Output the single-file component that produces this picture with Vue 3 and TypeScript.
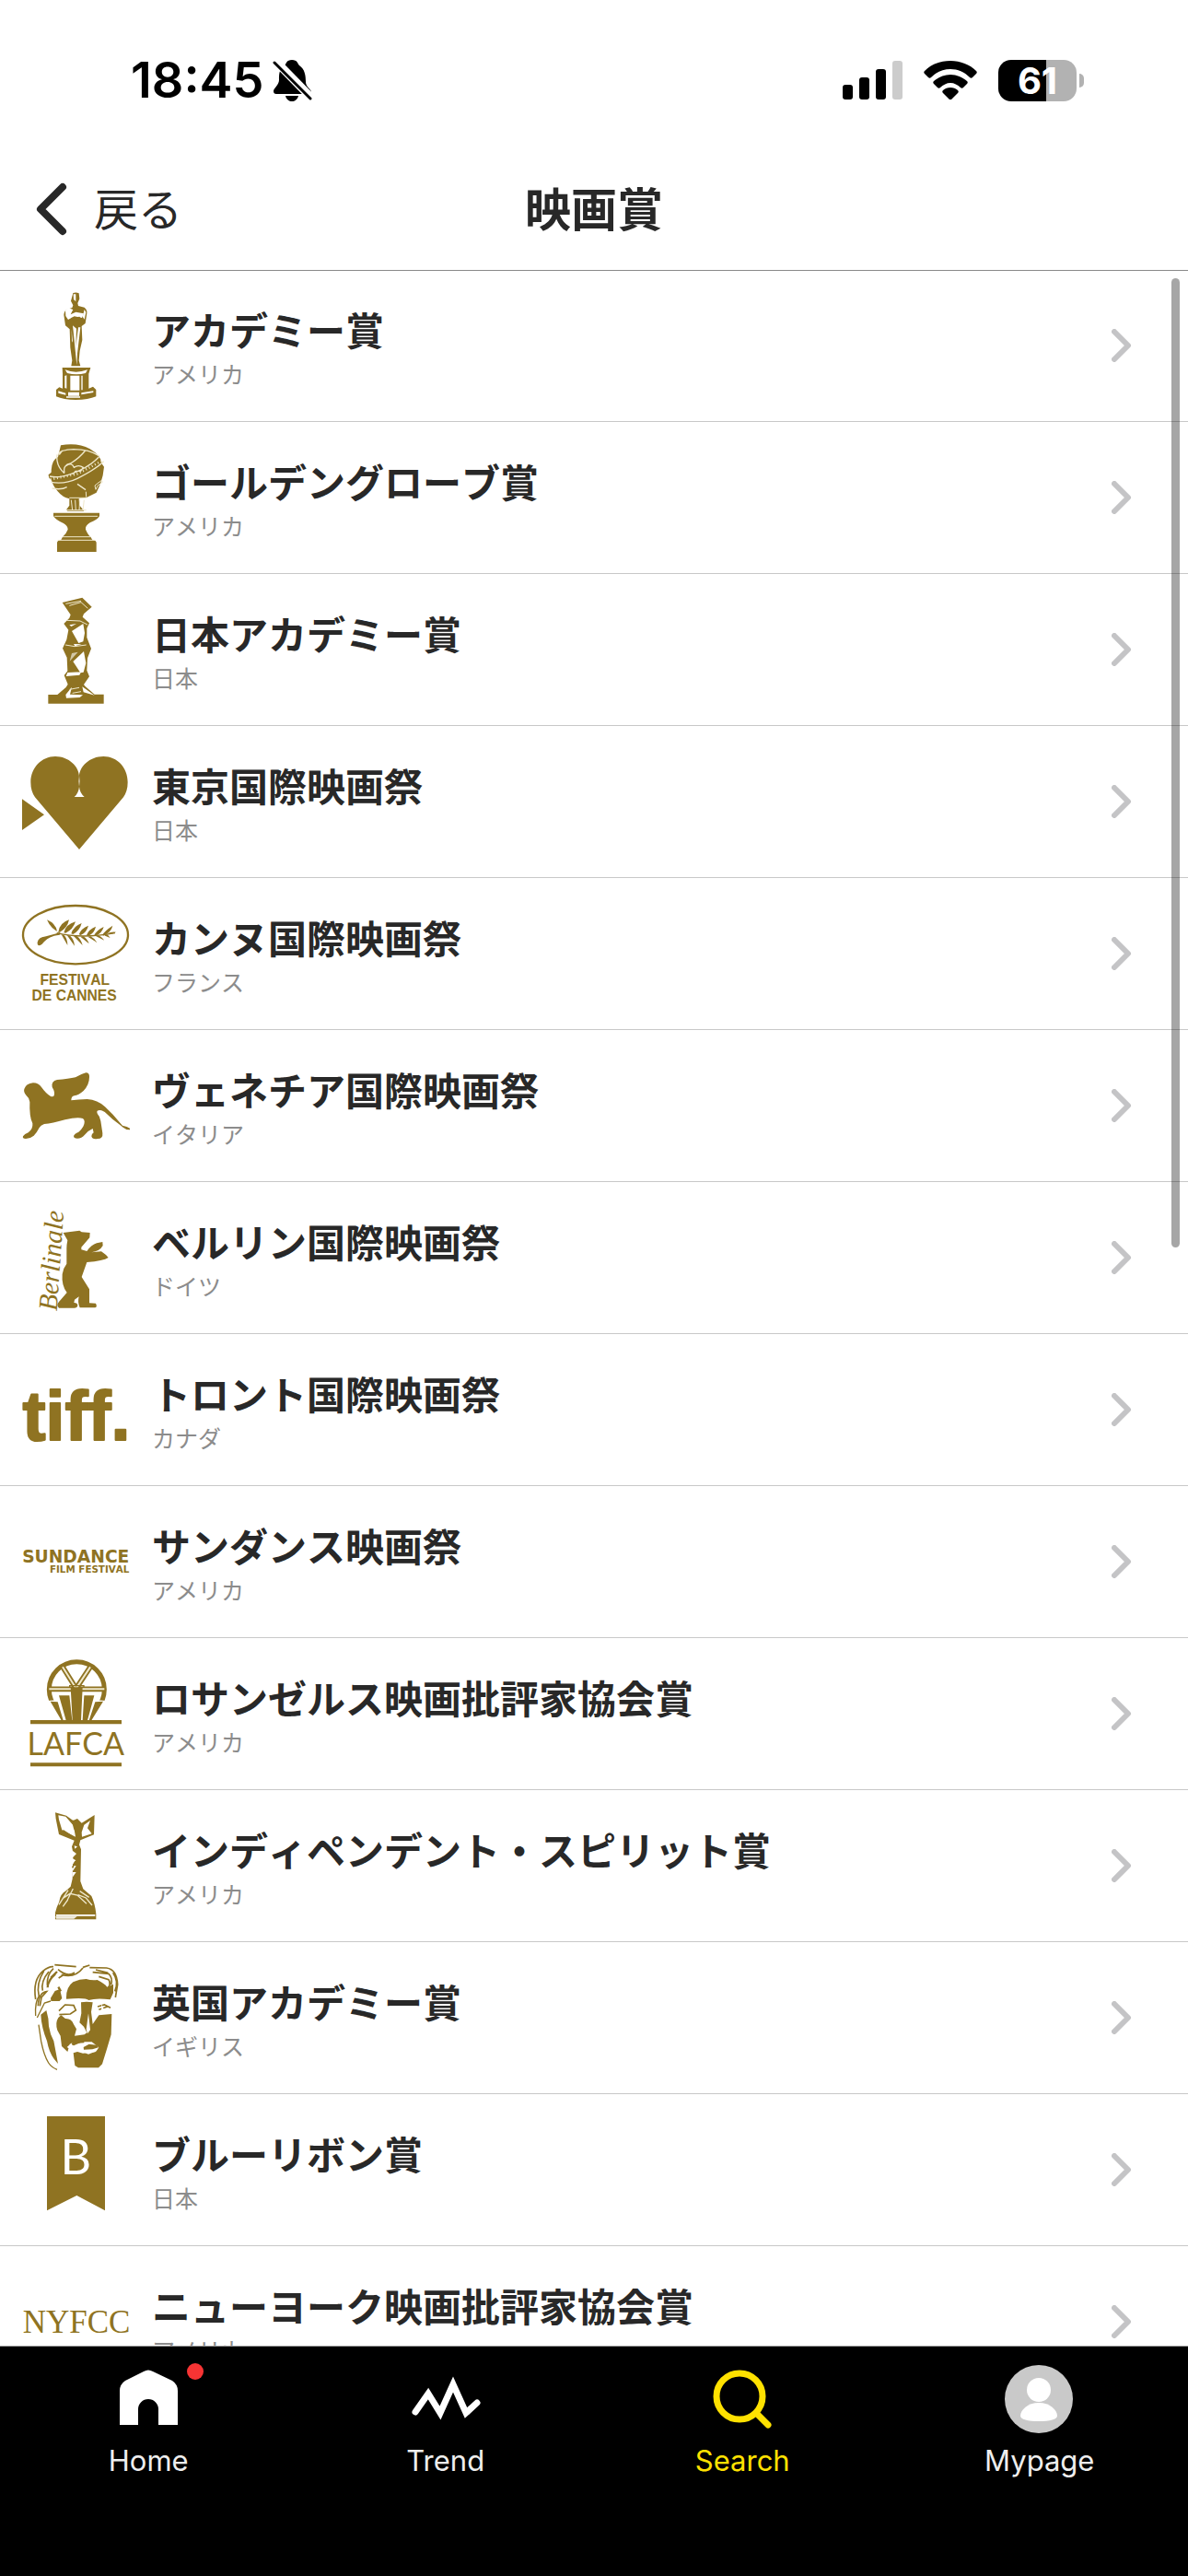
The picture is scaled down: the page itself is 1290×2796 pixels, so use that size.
<script setup lang="ts">
interface Award {
  id: string
  name: string
  country: string
  viewBox: string
}

interface Tab {
  id: string
  label: string
  active?: boolean
}

const upper = '72 81 351 351'
const lower = '72 576 351 351'

const awards: Award[] = [
  { id: 'oscar', name: 'アカデミー賞', country: 'アメリカ', viewBox: upper },
  { id: 'globe', name: 'ゴールデングローブ賞', country: 'アメリカ', viewBox: lower },
  { id: 'japan', name: '日本アカデミー賞', country: '日本', viewBox: upper },
  { id: 'tokyo', name: '東京国際映画祭', country: '日本', viewBox: lower },
  { id: 'cannes', name: 'カンヌ国際映画祭', country: 'フランス', viewBox: upper },
  { id: 'venice', name: 'ヴェネチア国際映画祭', country: 'イタリア', viewBox: lower },
  { id: 'berlin', name: 'ベルリン国際映画祭', country: 'ドイツ', viewBox: upper },
  { id: 'toronto', name: 'トロント国際映画祭', country: 'カナダ', viewBox: lower },
  { id: 'sundance', name: 'サンダンス映画祭', country: 'アメリカ', viewBox: upper },
  { id: 'lafca', name: 'ロサンゼルス映画批評家協会賞', country: 'アメリカ', viewBox: lower },
  { id: 'spirit', name: 'インディペンデント・スピリット賞', country: 'アメリカ', viewBox: upper },
  { id: 'bafta', name: '英国アカデミー賞', country: 'イギリス', viewBox: lower },
  { id: 'ribbon', name: 'ブルーリボン賞', country: '日本', viewBox: upper },
  { id: 'nyfcc', name: 'ニューヨーク映画批評家協会賞', country: 'アメリカ', viewBox: lower },
]

const tabs: Tab[] = [
  { id: 'home', label: 'Home' },
  { id: 'trend', label: 'Trend' },
  { id: 'search', label: 'Search', active: true },
  { id: 'mypage', label: 'Mypage' },
]
</script>

<template>
  <div class="screen">
    <div class="status">
      <div class="status-left">
        <span class="time">18:45</span>
        <svg class="bell" viewBox="0 0 43 46" width="43" height="46">
          <path d="M13 7C15 5 15 1 21 1s6 4 8 6c6 4 7 11 7 18 0 5 6 8 6 11 0 2-1 2-3 2H4c-2 0-3-1-3-3 0-3 6-7 6-12 0-7 0-12 6-16z" />
          <path d="M14 40h14c-1 4-4 6-7 6s-6-2-7-6z" />
          <path d="M1 0 43 43" stroke="#fff" stroke-width="9" />
          <path d="M2 4 41 43" stroke="#000" stroke-width="3" stroke-linecap="round" />
        </svg>
      </div>
      <div class="status-right">
        <svg viewBox="0 0 65 42" width="65" height="42">
          <rect x="0" y="26" width="11" height="16" rx="3" />
          <rect x="18" y="18" width="11" height="24" rx="3" />
          <rect x="36" y="9" width="11" height="33" rx="3" />
          <rect x="54" y="0" width="11" height="42" rx="3" fill="#ccc" />
        </svg>
        <svg viewBox="0 0 58 42" width="58" height="42">
          <path d="M29 0c11 0 21 4 28 11 1 1 1 2 0 3l-4 4c-1 1-2 1-3 0C44 12 37 9 29 9S14 12 8 18c-1 1-2 1-3 0l-4-4c-1-1-1-2 0-3C8 4 18 0 29 0z" />
          <path d="M29 15c7 0 13 3 18 7 1 1 1 2 0 3l-4 4c-1 1-2 1-3 0-3-3-7-5-11-5s-8 2-11 5c-1 1-2 1-3 0l-4-4c-1-1-1-2 0-3 5-4 11-7 18-7z" />
          <path d="M29 29c3 0 6 1 8 3 1 1 1 2 0 3l-7 7c-1 1-1 1-2 0l-7-7c-1-1-1-2 0-3 2-2 5-3 8-3z" />
        </svg>
        <div class="battery">
          <span class="battery-level">61</span>
          <span class="battery-tip"></span>
        </div>
      </div>
    </div>

    <header class="nav">
      <button class="back" type="button">
        <svg viewBox="0 0 34 58" width="34" height="58" fill="none" stroke="#282828" stroke-width="8" stroke-linecap="round" stroke-linejoin="round">
          <path d="M29 5 5 29l24 24" />
        </svg>
        <span class="back-label">戻る</span>
      </button>
      <h1>映画賞</h1>
    </header>

    <main class="content">
      <ul class="list">
        <li v-for="award in awards" :key="award.id">
          <a class="row" :href="'#' + award.id">
            <svg class="art" :viewBox="award.viewBox" width="117" height="117" aria-hidden="true">
              <g v-if="award.id === 'oscar'">
                <path d="M238 84q10-4 19 1l2 18-6 14 2 9 20 5q10 8 8 20l-5 32-12 9 2 45-8 35-3 32 5 18h-30l3-18-6-42-2-60-14-12-5-35q1-14 11-18l16-5 3-8-7-14z" />
                <path d="M203 327h92l-6 20v48l14-6 10 10v22q-25 11-66 11t-64-11v-22l10-8 11 4v-48z" />
                <g fill="#fff">
                  <path d="M239 88h8v24l-7-7z" />
                  <path d="m213 140 10-7 15 5-8 16 17-8 26 5-6 14-25-5-20 11-8-12z" />
                  <path d="m275 138 5 9-5 23-6-9z" />
                  <path d="m237 190 12 10-2 58 8-62h7l-10 85-2 38-6-60z" />
                  <path d="M233 200l4 45-3-5z" />
                  <path d="M212 334q35 14 73 0l-6 11q-30 8-60 0z" />
                  <path d="M211 354l6-2v43l-6-2zM229 353h30v48h-30zM265 353h4v47h-4z" />
                  <path d="M190 403l24 7v6l-24-6zM222 407h36v12h-36zM265 409l39-6v5l-39 7zM216 421h45v4h-45z" />
                </g>
                <path d="m231 165 28-4 6 7-24 8z" />
              </g>

              <g v-else-if="award.id === 'globe'">
                <path d="M198 580q55-10 95 12 35 20 40 50l6 8-4 28-8 28-13 28-32 16-25 4 1 20 16 20h-54l-4-4 10-14v-22q-22-4-38-24-16-18-20-36-11-8-10-18l9-8q0-40 22-50z" />
                <path d="M174 800h150v10q-5 12-31 22-16 10-14 22 8 18 16 24l6 10q10 0 13 8v31H186v-31q3-8 13-8l5-10q12-10 17-24 0-12-14-20-27-12-33-24z" />
                <g fill="none" stroke="#efe8cb" stroke-width="4">
                  <path d="M162 681q28 7 70-8 57-20 90-55M166 700q45 8 86-12 60-30 86-56M190 609q5-14 50-16 50 0 84 22M186 610q-5 36 24 61M278 597q-19 24-48 42-26 5-20 30M216 646q18-12 25 6 15-10 30 0l-8 12h-17l-8 9M252 706l27 19M170 720q30 6 48-4M203 597l-10 14" />
                  <path d="M164 691l88-18 80-42" stroke-dasharray="3 8" stroke-width="8" />
                  <path d="M312 724l6-12 16-12-3-6-22 17zM280 731l1 18M226 751h55M232 758l4 34M245 758l2 34M260 758l-2 34M274 758l-4 34M216 791h65M178 811h140M204 878h90M188 889h122" stroke-width="3" />
                </g>
              </g>

              <g v-else-if="award.id === 'japan'">
                <path d="m203 102 65-16 31 30-26 23-4 10 22 20-8 17v30l14 36-12 31-2 40 8 20-18 26 4 5 31 27h30v30H157v-29h30l28-24 6-10-12-29 11-14-2-44-14-30 13-28 6-32-15-20 18-19 4-10z" />
                <g fill="#fff">
                  <path d="m234 195 37-24 5 30-5 28-15 5zM238 294l35-33 7 38-8 30-10 2zM220 330l44-2-5 10-44 4zM268 376l40 28-36-10z" />
                  <path d="m226 175 23-4-17 9zM240 237l26 1-22 6zM214 402l20-25-6 24 42 2-10 8-44 2z" />
                  <path d="m234 267 20-4-27 30z" opacity=".6" />
                </g>
                <path d="m214 106 50-9M226 112l38-11 22 20M217 160l44 2 24 12M213 240l30 5 38-5M227 385l31-6M236 397l28-5" fill="none" stroke="#efe8cb" stroke-width="3" />
              </g>

              <g v-else-if="award.id === 'tokyo'">
                <path d="M258 906 114 736q-14-20-14-49c0-47 36-84 80-84s78 33 78 66c0-33 34-66 79-66s79 37 79 84q0 29-14 49z" />
                <path d="M258 666l3 18-3 17-3-17z" fill="#fff" opacity=".5" />
                <path d="M258 702q2 20 17 33h-33q14-12 16-33z" fill="#fff" />
                <path d="m72 742 72 51-72 50z" />
              </g>

              <g v-else-if="award.id === 'cannes'">
                <ellipse cx="246" cy="194" rx="171" ry="95" fill="none" stroke="#8f7322" stroke-width="7" />
                <path d="M122 218q3-16 28-19l45-12q-30-12-42-42 28 12 33 37 4 6 13 7l-5 5q-34 2-57 30-17 12-15-6z" />
                <path d="M185 188q80 20 190 0" fill="none" stroke="#8f7322" stroke-width="4" />
                <path d="M190 185q4-30 35-40-6 28-30 40zM208 187q6-27 38-36-8 26-32 37zM232 190q7-24 34-34-6 24-28 36zM257 193q7-20 31-29-6 23-25 31zM282 195q7-19 30-28-4 21-24 30zM306 197q8-18 32-29-6 21-27 30zM333 195q8-14 34-31-4 19-28 33zM350 190q12-7 28-5-13 8-28 5zM200 193l20 35q0-22-12-34zM218 195l25 35q-2-24-17-34zM240 198l29 30q-6-22-20-31zM262 200l28 23q-7-18-19-24zM286 200l30 19q-10-15-21-20zM312 198l28 14q-8-11-19-16zM337 195l22 9-9-11z" />
                <text x="244" y="356" font-family="Liberation Sans, Arial, sans-serif" font-weight="700" font-size="47" text-anchor="middle">FESTIVAL</text>
                <text x="242" y="408" font-family="Liberation Sans, Arial, sans-serif" font-weight="700" font-size="47" text-anchor="middle">DE CANNES</text>
              </g>

              <path v-else-if="award.id === 'venice'" d="M97 738Q95 724 85 716 76 706 79 696 85 678 108 676 126 676 135 690 150 711 164 719 172 723 176 718 180 706 170 690 166 670 186 666 224 663 246 658 268 646 280 643 292 643 291 657 291 682 272 702 256 716 242 718 232 720 232 733 256 730 284 729 318 731 342 754 370 780 391 806L399 815Q415 818 423 824V829Q410 829 401 821L390 812Q368 797 347 776 332 762 320 766 313 768 318 778 326 786 328 800L334 840Q336 858 318 858 300 861 298 850 298 842 305 838L302 825Q288 831 276 845 266 857 252 857 240 857 240 849 242 842 256 836 264 830 271 818 280 800 270 792 252 786 212 796 170 808 144 810 132 814 128 822 120 838 110 848 98 858 84 858 72 858 75 850 80 842 92 838 108 826 106 808 95 786 97 738z" />

              <g v-else-if="award.id === 'berlin'">
                <text transform="translate(185 430) rotate(-86)" font-family="Liberation Serif, Times New Roman, serif" font-style="italic" font-size="88">Berlinale</text>
                <path d="m206 174 53-7 7 5 27 2-1 16-27 31v8l18 5q15-21 32-26l19-4 1 12q-10 18-37 22l32-3 15 11 8 9q-16 11-70 15l-17 48 25 40v45l21 1q6 12-3 14h-49q-8-17-3-36l-14 10-2 10q12 0 12 9-2 10-15 8h-46q-10-10 0-20l26-30q-18-23-15-60 3-20 14-34v-50q0-12 3-26z" />
              </g>

              <g v-else-if="award.id === 'toronto'">
                <text x="249" y="848" font-family="Liberation Sans, Arial, sans-serif" font-weight="700" font-size="226" text-anchor="middle" stroke="#8f7322" stroke-width="6" stroke-linejoin="round">tiff.</text>
              </g>

              <g v-else-if="award.id === 'sundance'" font-family="DejaVu Sans, Verdana, sans-serif" font-weight="700" text-anchor="end">
                <text x="421" y="258" font-size="56">SUNDANCE</text>
                <text x="421" y="291" font-size="31">FILM FESTIVAL</text>
              </g>

              <g v-else-if="award.id === 'lafca'">
                <circle cx="250" cy="671" r="90" fill="none" stroke="#8f7322" stroke-width="15" />
                <g fill="none">
                  <path d="M204 598l44 70 46-70M160 670h180" stroke="#8f7322" stroke-width="17" />
                  <path d="M204 598l44 70 46-70M160 670h180" stroke="#efe8cb" stroke-width="6" />
                </g>
                <path d="m152 708 38 66h118l38-66-30-2V688H184v18z" fill="#fff" />
                <path d="m164 710 24 2 18 60h-6zM192 691h34l9 81h-20zM230 664h39l-5 108h-28zM274 691h33l-22 81h-16zM310 712l26-2-38 62h-8z" />
                <path d="M227 664v-5h46v5" fill="none" stroke="#8f7322" stroke-width="4" />
                <path d="M99 771h297v13H99zM99 910h297v12H99z" />
                <text x="247" y="884" font-family="Lato, sans-serif" font-size="102" text-anchor="middle">LAFCA</text>
              </g>

              <g v-else-if="award.id === 'spirit'">
                <path d="m180 82 36 10 22 16 14-6 14 14 42-26-2 64-44 18-4 15 6 15-2 104 9 25 27 23q12 26 15 58v18H180v-22q4-18 13-36 3-25 22-35l15-14 6-25 2-85-4-20 8-20-50-20-10-50z" />
                <g fill="#fff">
                  <path d="m190 91 24 4 26 30 6 36-44-22-10-34zM266 146l8-24 20-14-9 25 14 18-32 10z" />
                  <path d="m237 207 12 9-14 14 12 8-13 16 14 2-13 19 13 1-12 17zM242 190l10 3-8 7zM183 414h127v5H183z" />
                </g>
                <path d="m192 382 30-47M204 362l24-16 24 5 30 28M238 330l-18 36M254 350l26 10 20 24M260 338l30 20M205 388l16-22" fill="none" stroke="#efe8cb" stroke-width="4" />
                <path d="M181 420h70l-10 8h-58z" fill="#fff" opacity=".85" />
                <path d="M236 108l14 18 2 30-10-24zM205 140l36 24M246 240l-10 22" fill="none" stroke="#8f7322" stroke-width="5" />
              </g>

              <g v-else-if="award.id === 'bafta'">
                <path d="M216 684q0-34 22-50 22-10 43-10 16 5 36 3 24 12 32 23l20-9v28l-10 22q-45-6-70 2-9-10-73-4zM165 686l14-23 16-6 7 30-8 9h-28z" />
                <path d="m264 700 18-2 20 2-5 31 5 40 20-29 42-4-2 67-13 44-16 52-12 12h-66l-11-7-5-41 23-7 26 11 26-10 8-12-23-18h-31l-28 12-12-6-8 26-19-18-4-34-10-18q-8-24 3-41l9-8 14 11q20-1 27 19l9 15-6 22 32-4 8-6-10-20-14-13 6-30z" />
                <path d="M133 740l18-14q8 26 8 52 4 26 16 48l14 74-13-16q-16-20-23-58-18-45-20-86z" />
                <g fill="none" stroke="#8f7322" stroke-width="5">
                  <path d="M116 690q-10-64 24-92 20-16 34-14M124 712q2-44 28-47l-17 19-5 28M143 598q-26 40-16 82M159 600q-27 32-20 62M174 590q-22 20-20 54M178 578l70 6M189 593q30 26 54 10M200 610q45 12 70-22M191 621l18-12M270 586l22-7M292 587l55 1q34 5 36 54l-7 42M302 602l52 5q14 13 8 36M322 616l32 10q10 14-6 32M312 594l40 10M368 604q20 28 6 60" />
                  <path d="M126 773l8 54q9 46 24 70 9 14 28 22M116 744q-3-45 12-66M121 750l24-48 20-6" stroke-width="4" />
                  <path d="M192 728l20-20 28 2 7 16-18 12-36 2M318 714l22-6 20 10M322 724l28-10M232 832l42-3" stroke-width="5" />
                  <path d="m190 650 8 14M180 608q-25 22-25 44M166 620l20-20" stroke-width="7" />
                </g>
                <path d="M288 736l6 54-9 12-4-14zM240 857l30 9 40-4 5-6-20 4-20-4zM218 846l17-15-6 22zM330 706l12 24-11 8z" fill="#fff" />
                <path d="M272 846l18-10 25 3 6 8-20 6-28 1z" />
              </g>

              <g v-else-if="award.id === 'ribbon'">
                <path d="M153 81h189v307l-92-49-97 49z" />
                <text x="247" y="269" fill="#fff" font-family="Lato, sans-serif" font-size="156" text-anchor="middle">B</text>
              </g>

              <text v-else x="249" y="786" font-family="Liberation Serif, Times New Roman, serif" font-size="105" text-anchor="middle">NYFCC</text>
            </svg>
            <span class="text">
              <span class="name">{{ award.name }}</span>
              <span class="country">{{ award.country }}</span>
            </span>
            <svg class="chevron" viewBox="0 0 22 36" width="22" height="36" fill="none" stroke="#c4c4c6" stroke-width="6" stroke-linecap="round" stroke-linejoin="round">
              <path d="m3 3 15 15L3 33" />
            </svg>
          </a>
        </li>
      </ul>
      <div class="scrollbar"></div>
    </main>

    <nav class="tabs">
      <a v-for="tab in tabs" :key="tab.id" class="tab" :class="{ active: tab.active }" :href="'#' + tab.id">
        <span class="tab-icon">
          <svg v-if="tab.id === 'home'" viewBox="0 0 76 76" width="76" height="76">
            <path d="M7 66V29q0-7 6-11L33 8q5-3 10 0l21 10q6 4 6 11v37H49V49a11 11 0 0 0-22 0v17z" />
          </svg>
          <svg v-else-if="tab.id === 'trend'" viewBox="0 0 76 76" width="76" height="76" fill="none" stroke="#fff" stroke-width="7" stroke-linecap="round" stroke-miterlimit="10">
            <path d="M5 52 19 32l13 21 14-31 14 31 12-11" />
          </svg>
          <svg v-else-if="tab.id === 'search'" viewBox="0 0 76 76" width="76" height="76" fill="none" stroke="#ffe100" stroke-width="7" stroke-linecap="round">
            <circle cx="35" cy="35" r="25" />
            <path d="m54 54 12 12" />
          </svg>
          <svg v-else viewBox="0 0 76 76" width="76" height="76">
            <circle cx="37" cy="38" r="37" fill="#c9c9c9" />
            <circle cx="37" cy="28" r="13" />
            <path d="M37 42c12 0 20 8 20 14 0 4-8 6-20 6s-20-2-20-6c0-6 8-14 20-14z" />
          </svg>
          <span v-if="tab.id === 'home'" class="dot"></span>
        </span>
        <span class="tab-label">{{ tab.label }}</span>
      </a>
    </nav>
  </div>
</template>

<style>
body {
  margin: 0;
  background: #fff;
}
</style>

<style scoped>
.screen {
  display: flex;
  flex-direction: column;
  height: 100vh;
  overflow: hidden;
  background: #fff;
  color: #282828;
  font-family: Inter, "Noto Sans CJK JP", sans-serif;
}

.status {
  flex: none;
  display: flex;
  align-items: center;
  justify-content: space-between;
  height: 160px;
  padding: 14px 112px 0 142px;
  box-sizing: border-box;
  color: #000;
}

.status-left {
  display: flex;
  align-items: center;
  gap: 9px;
}

.time {
  font-size: 54px;
  font-weight: 600;
  line-height: 60px;
}

.status-right {
  display: flex;
  align-items: center;
  gap: 23px;
}

.battery {
  position: relative;
  width: 85px;
  height: 45px;
  margin-right: 9px;
  border-radius: 14px;
  background: linear-gradient(to right, #000 61%, #b2b2b2 61%);
}

.battery-level {
  display: block;
  color: #fff;
  font-size: 40px;
  font-weight: 700;
  line-height: 45px;
  text-align: center;
}

.battery-tip {
  position: absolute;
  top: 15px;
  right: -8px;
  width: 5px;
  height: 15px;
  border-radius: 0 5px 5px 0;
  background: #b2b2b2;
}

.nav {
  position: relative;
  z-index: 1;
  flex: none;
  display: grid;
  grid-template-columns: 1fr auto 1fr;
  align-items: center;
  height: 134px;
  box-sizing: border-box;
  border-bottom: 1px solid #8a8a8a;
}

.back {
  justify-self: start;
  display: flex;
  align-items: center;
  gap: 29px;
  margin: 0;
  padding: 0 39px;
  border: 0;
  background: none;
  color: inherit;
  font-family: "Noto Sans CJK JP", sans-serif;
  font-size: 48px;
  font-kerning: none;
  line-height: 60px;
}

.back-label {
  padding-bottom: 6px;
}

h1 {
  margin: 0;
  padding-bottom: 6px;
  font-family: "Noto Sans CJK JP", sans-serif;
  font-size: 50px;
  font-weight: 700;
  line-height: 60px;
}

.content {
  position: relative;
  flex: 1;
  min-height: 0;
  margin-top: -1px;
  overflow: hidden;
}

.list {
  margin: 0;
  padding: 0;
  list-style: none;
}

.row {
  display: flex;
  align-items: center;
  height: 165px;
  padding: 0 61px 0 24px;
  box-sizing: border-box;
  border-bottom: 1px solid #c8c8c8;
  color: inherit;
  text-decoration: none;
  font-family: "Noto Sans CJK JP", sans-serif;
  font-kerning: none;
}

.art {
  flex: none;
  overflow: visible;
  fill: #8f7322;
}

.text {
  flex: 1;
  display: flex;
  flex-direction: column;
  margin-left: 24px;
}

.name {
  font-size: 42px;
  font-weight: 700;
  line-height: 60px;
}

.country {
  color: #8c8c8c;
  font-size: 25px;
  line-height: 36px;
}

.chevron {
  flex: none;
}

.scrollbar {
  position: absolute;
  top: 9px;
  right: 9px;
  width: 9px;
  height: 46.7%;
  border-radius: 5px;
  background: rgba(0, 0, 0, 0.35);
}

.tabs {
  flex: none;
  display: flex;
  height: 250px;
  box-sizing: border-box;
  border-top: 1px solid #999;
  background: #000;
}

.tab {
  flex: 1;
  display: flex;
  flex-direction: column;
  align-items: center;
  padding-top: 19px;
  color: #eee;
  text-decoration: none;
}

.tab.active {
  color: #ffe100;
}

.tab-icon {
  position: relative;
  height: 76px;
  fill: #fff;
}

.dot {
  position: absolute;
  top: -1px;
  right: -22px;
  width: 18px;
  height: 18px;
  border-radius: 50%;
  background: #f73434;
}

.tab-label {
  margin-top: 11px;
  font-size: 31px;
  line-height: 36px;
}
</style>
